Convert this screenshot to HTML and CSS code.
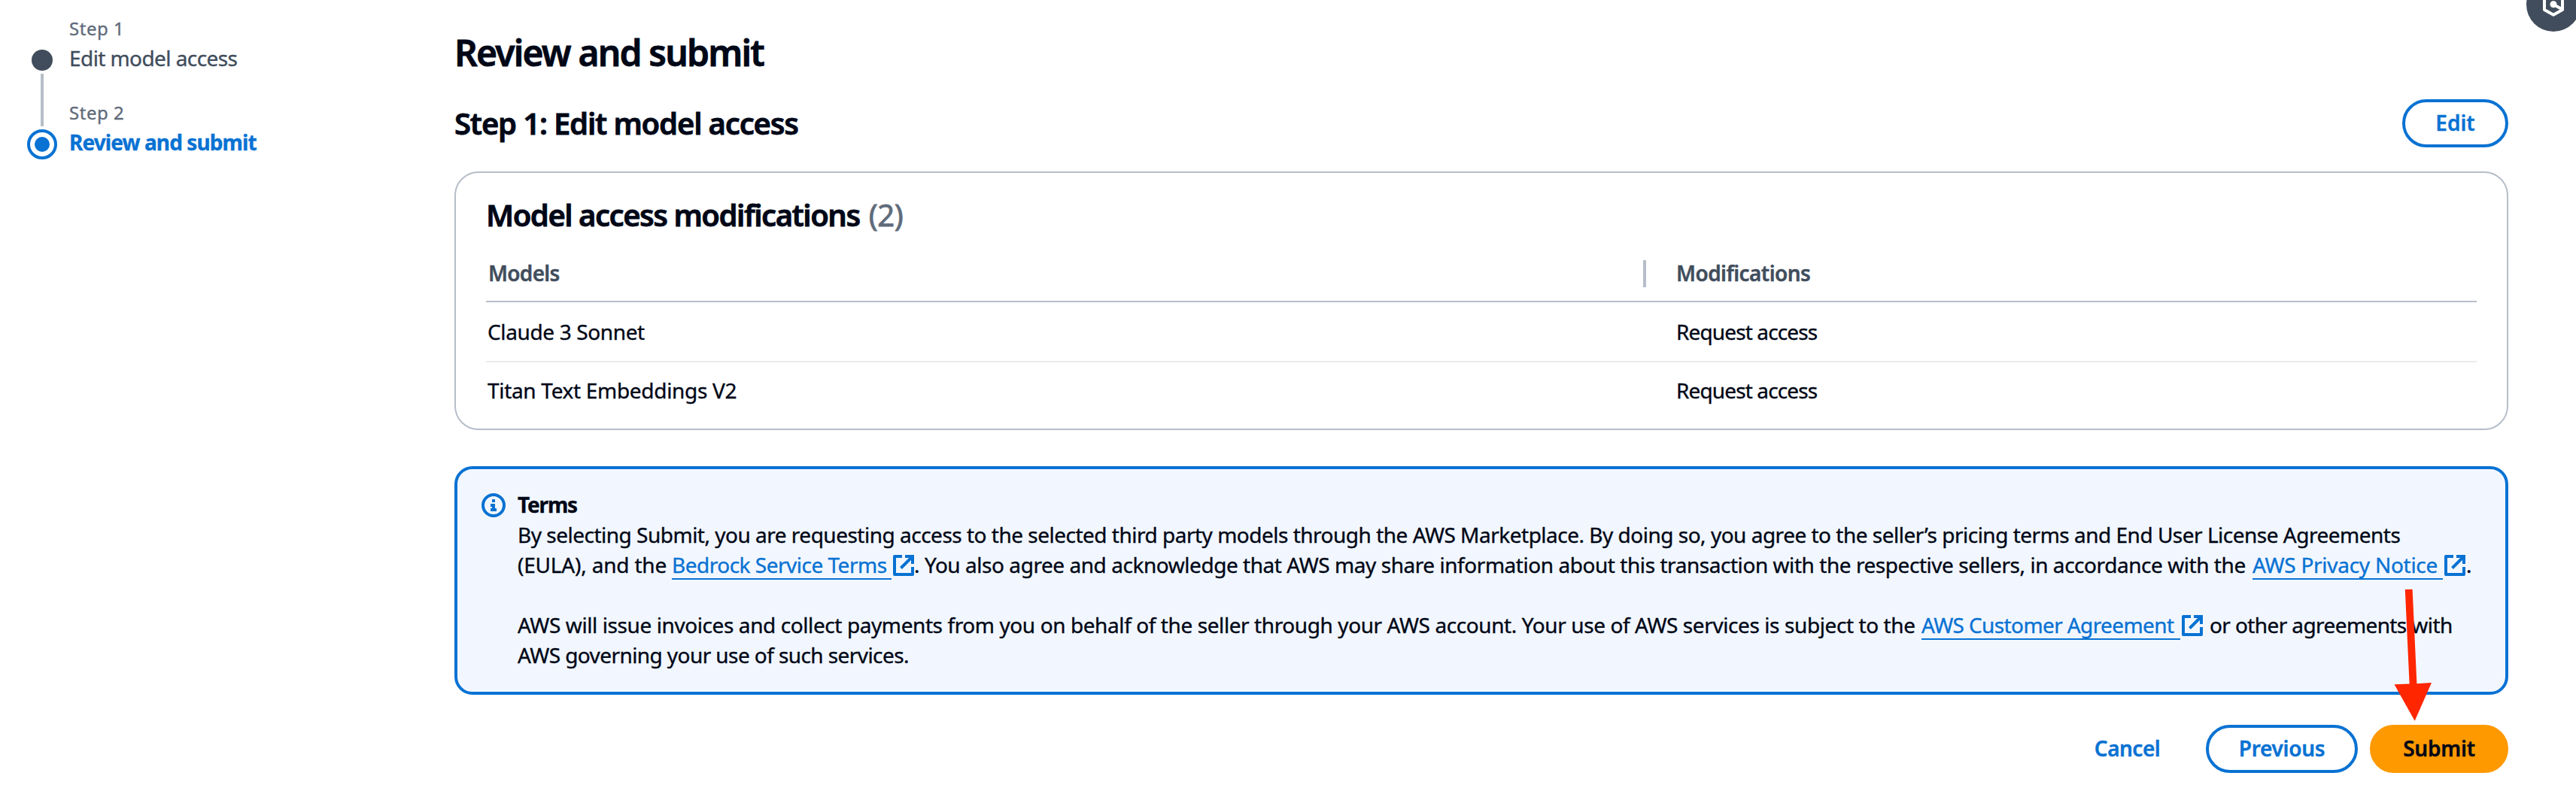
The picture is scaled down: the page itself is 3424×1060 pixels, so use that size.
FILE: index.html
```html
<!DOCTYPE html>
<html lang="en">
<head>
<meta charset="utf-8">
<title>Review and submit</title>
<link rel="stylesheet" href="styles.css">
</head>
<body>
<svg width="0" height="0" class="sprite" aria-hidden="true">
  <symbol id="external" viewBox="0 0 28 28">
    <path d="M12 2H2V26H26V16M16 2H26V12M25 3L10.5 17.5" fill="none" stroke="currentColor" stroke-width="4" stroke-linejoin="round"/>
    <path d="M20 0H28V8Z" fill="currentColor"/>
  </symbol>
</svg>
<div class="layout">
  <nav class="steps">
    <div class="markers">
      <span class="dot"></span>
      <span class="rail"></span>
      <span class="ring"></span>
    </div>
    <div class="step-list">
      <div class="step">
        <div class="step-label">Step 1</div>
        <div class="step-name">Edit model access</div>
      </div>
      <div class="step">
        <div class="step-label">Step 2</div>
        <div class="step-name current">Review and submit</div>
      </div>
    </div>
  </nav>
  <main class="content">
    <h1>Review and submit</h1>
    <div class="section-head">
      <h2>Step 1: Edit model access</h2>
      <button class="btn edit">Edit</button>
    </div>
    <section class="card">
      <h2 class="card-title"><span class="card-name">Model access modifications</span> <span class="count">(2)</span></h2>
      <div class="row head">
        <div class="cell models">Models</div>
        <div class="divider"></div>
        <div class="cell mods">Modifications</div>
      </div>
      <div class="row">
        <div class="cell claude">Claude 3 Sonnet</div>
        <div></div>
        <div class="cell request">Request access</div>
      </div>
      <div class="row last">
        <div class="cell titan">Titan Text Embeddings V2</div>
        <div></div>
        <div class="cell request">Request access</div>
      </div>
    </section>
    <section class="alert">
      <svg class="info" viewBox="0 0 32 32">
        <circle cx="16" cy="16" r="14" fill="none" stroke="currentColor" stroke-width="4"/>
        <path d="M14 8h4v4h-4zM12 14h6v6h2v4h-8v-4h2v-2h-2z" fill="currentColor"/>
      </svg>
      <div class="terms">
        <div class="line terms-title">Terms</div>
        <div class="line line-a">By selecting Submit, you are requesting access to the selected third party models through the AWS Marketplace. By doing so, you agree to the seller’s pricing terms and End User License Agreements</div>
        <div class="line">
          <span class="eula">(EULA), and the</span>
          <a class="link bedrock">Bedrock Service Terms</a><svg class="ext"><use href="#external"/></svg>
          <span class="ack">. You also agree and acknowledge that AWS may share information about this transaction with the respective sellers, in accordance with the</span>
          <a class="link privacy">AWS Privacy Notice</a><svg class="ext"><use href="#external"/></svg>
          <span class="stop">.</span>
        </div>
        <div class="line paragraph">
          <span class="invoices">AWS will issue invoices and collect payments from you on behalf of the seller through your AWS account. Your use of AWS services is subject to the</span>
          <a class="link customer">AWS Customer Agreement</a><svg class="ext"><use href="#external"/></svg>
          <span class="other">or other agreements with</span>
        </div>
        <div class="line line-b">AWS governing your use of such services.</div>
      </div>
    </section>
    <div class="actions">
      <button class="btn cancel">Cancel</button>
      <button class="btn previous">Previous</button>
      <button class="btn submit">Submit</button>
    </div>
  </main>
</div>
<svg class="assistant" viewBox="0 0 72 72">
  <circle cx="36" cy="36" r="36" fill="#414d5c"/>
  <path d="M36 22.5L48 29V43L36 49.8L24 43V29Z" fill="none" stroke="#fff" stroke-width="4" stroke-linejoin="round"/>
  <path d="M36 36L48 42.5" stroke="#fff" stroke-width="4"/>
  <circle cx="36" cy="35.8" r="4.5" fill="#fff"/>
</svg>
<svg class="pointer" viewBox="0 0 60 180">
  <path d="M16.8 3.9L26.6 3.7L32.4 129.2L52 128L29.7 178.7L2.5 130.3L22.6 129.5Z" fill="#ff2600"/>
</svg>
</body>
</html>
```

FILE: styles.css
```css
* { box-sizing: border-box; }
body {
  margin: 0;
  width: 3424px;
  height: 1060px;
  overflow: hidden;
  position: relative;
  background: #fff;
  color: #000716;
  font: 400 28px/40px "Noto Sans", "Open Sans", sans-serif;
  white-space: nowrap;
  -webkit-text-stroke: .35px;
}
.sprite { display: block; height: 0; }
.layout { display: flex; }

/* Wizard navigation */
.steps { display: flex; width: 604px; padding-left: 36px; gap: 16px; }
.markers { display: flex; flex-direction: column; align-items: center; gap: 4px; width: 40px; padding-top: 66px; }
.dot { width: 28px; height: 28px; border-radius: 50%; background: #414d5c; }
.rail { width: 4px; height: 70px; background: #b6bec9; }
.ring {
  width: 40px;
  height: 40px;
  padding: 6px;
  border: 4px solid #0972d3;
  border-radius: 50%;
  background: #0972d3 content-box;
}
.step-list { display: flex; flex-direction: column; gap: 37px; padding-top: 22px; }
.step-label { margin-bottom: 3px; font-size: 24px; line-height: 32px; letter-spacing: .52px; color: #5f6b7a; }
.step-name { color: #414d5c; letter-spacing: -.58px; }
.step-name.current { color: #0972d3; font-weight: 700; letter-spacing: -.9px; }

/* Main column */
.content { width: 2730px; padding-top: 40px; }
h1, h2 { margin: 0; font-weight: 600; -webkit-text-stroke: .8px; }
h1 { font-size: 48px; line-height: 60px; letter-spacing: -1.83px; }
h2 { font-size: 40px; line-height: 50px; letter-spacing: -1.18px; }
.section-head { display: flex; justify-content: space-between; align-items: center; height: 64px; margin-top: 32px; }

.btn {
  height: 64px;
  padding: 0 0 2px;
  border: 4px solid #0972d3;
  border-radius: 32px;
  background: #fff;
  color: #0972d3;
  font: 600 28px/40px "Noto Sans", "Open Sans", sans-serif;
  -webkit-text-stroke: .4px;
}
.edit { width: 141px; }
.cancel { width: 133px; margin-right: 38px; border-color: transparent; letter-spacing: -.51px; }
.previous { width: 202px; margin-right: 16px; letter-spacing: -.29px; }
.submit { width: 184px; border-color: #f90; background: #f90; color: #000716; letter-spacing: -.22px; }

.card { height: 344px; margin-top: 32px; padding: 31px 40px 0; border: 2px solid #b6bec9; border-radius: 32px; }
.card-title { display: flex; gap: 12px; }
.card-name { letter-spacing: -1.49px; }
.count { font-weight: 400; letter-spacing: -.4px; color: #5f6b7a; }
.row { display: grid; grid-template-columns: 1538px 4px 1fr; padding: 19px 0; border-bottom: 2px solid #e9ebed; }
.cell { padding-left: 2px; }
.cell + div + .cell { padding-left: 40px; }
.head { padding: 32px 0 17px; border-color: #b6bec9; color: #414d5c; font-weight: 600; -webkit-text-stroke: .4px; }
.head .models { padding-left: 3px; }
.divider { height: 36px; margin-top: 3px; background: #b6bec9; }
.last { padding-top: 17px; border: 0; }
.models { letter-spacing: -.72px; }
.mods { letter-spacing: -.58px; }
.claude { letter-spacing: -.37px; }
.titan { letter-spacing: -.31px; }
.request { letter-spacing: -.87px; }

/* Terms notice */
.alert {
  display: flex;
  gap: 16px;
  height: 304px;
  margin-top: 48px;
  padding: 27px 32px 0;
  border: 4px solid #0972d3;
  border-radius: 24px;
  background: #f2f7ff;
}
.info { flex: none; width: 32px; height: 32px; margin-top: 5px; color: #0972d3; }
.info + .terms { margin-left: 0; }
.line { display: flex; height: 40px; }
.line > * { flex: none; }
.paragraph { margin-top: 40px; }
.terms-title { font-weight: 700; letter-spacing: -1.18px; }
.line-a { letter-spacing: -.5px; }
.line-b { letter-spacing: -.58px; }
.eula { width: 205px; letter-spacing: -.19px; }
.ack { width: 1779px; letter-spacing: -.45px; }
.invoices { width: 1866px; letter-spacing: -.41px; }
.other { padding-left: 9px; letter-spacing: -.6px; }
.link { height: 40px; border-bottom: 2px solid #0972d3; color: #0972d3; }
.bedrock { width: 292px; letter-spacing: -.5px; }
.privacy { width: 253px; letter-spacing: -.27px; }
.customer { width: 344px; letter-spacing: -.61px; }
.ext { width: 28px; height: 28px; margin: 7px 0 0 2px; color: #0972d3; }
.stop { padding-left: 1px; }

.actions { display: flex; justify-content: flex-end; margin-top: 40px; }

/* Floating overlays */
.assistant { position: absolute; left: 3358px; top: -30px; width: 72px; height: 72px; }
.pointer { position: absolute; left: 3180px; top: 780px; width: 60px; height: 180px; }
```
